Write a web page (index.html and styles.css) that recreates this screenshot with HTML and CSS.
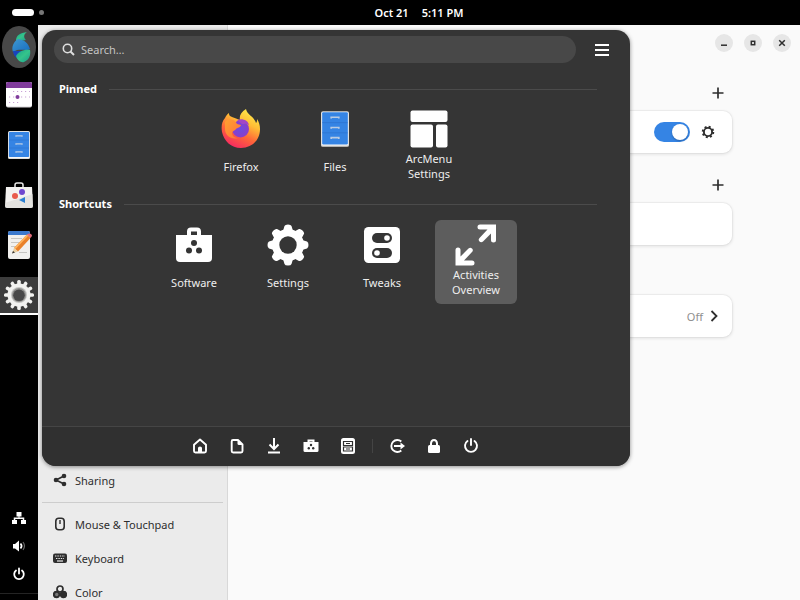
FILE: index.html
```html
<!DOCTYPE html>
<html lang="en">
<head>
<meta charset="utf-8">
<title>Desktop</title>
<link rel="stylesheet" href="styles.css">
</head>
<body>
<header class="topbar">
  <button class="workspaces" aria-label="Workspaces"><span class="pill"></span><span class="dot"></span></button>
  <button class="clock"><span>Oct 21</span><span>5:11 PM</span></button>
</header>
<div class="desktop">
  <nav class="dock" aria-label="Dock">
    <button class="dock-item start" aria-label="Menu">
      <svg width="34" height="42" viewBox="0 0 34 42">
        <defs>
          <linearGradient id="g1" x1="0" y1="0" x2="1" y2="1"><stop offset="0" stop-color="#17a58f"/><stop offset=".5" stop-color="#35c48a"/><stop offset="1" stop-color="#1b9d8d"/></linearGradient>
          <linearGradient id="g2" x1="0" y1="0" x2="1" y2="1"><stop offset="0" stop-color="#3f97d0"/><stop offset="1" stop-color="#176dc2"/></linearGradient>
        </defs>
        <path fill="url(#g1)" d="M14 15C14 9 18 7 25 6c-3 2-4 5-1 8-3 1-7 0-10 1z"/>
        <path fill="url(#g2)" d="M16 13c-4 2-7 8-5 13l4-2c6-1 10 1 13-1-2-6-5-9-12-10z"/>
        <path fill="#1844bd" d="M11 25h10l-5 8c-3-2-5-5-5-8z"/>
        <path fill="url(#g1)" d="M14 30c2-4 8-7 14-6 1 5-1 10-6 12-3 1-7-2-8-6z"/>
      </svg>
    </button>
    <button class="dock-item" aria-label="Calendar">
      <svg width="26" height="26" viewBox="0 0 26 26">
        <rect width="26" height="25.500" rx="2" fill="#d5d2d6"/><rect width="26" height="24.500" rx="2" fill="#fff"/>
        <path fill="#813d9c" d="M2 0h22a2 2 0 0 1 2 2v4H0V2a2 2 0 0 1 2-2z"/>
        <path stroke="#c9a3d6" stroke-width="1.200" stroke-dasharray="1.200 2.800" d="M7 9.500h17M3 15h21M3 20.500h10"/>
        <circle cx="11.500" cy="15" r="2" fill="#813d9c"/>
      </svg>
    </button>
    <button class="dock-item" aria-label="Files">
      <svg width="22" height="28" viewBox="0 0 22 28"><use href="#cabinet"/></svg>
    </button>
    <button class="dock-item" aria-label="Software">
      <svg width="28" height="28" viewBox="0 0 28 28">
        <path d="M10 7V4a2 2 0 0 1 2-2h4a2 2 0 0 1 2 2v3" fill="none" stroke="#e9e9e7" stroke-width="1.500"/>
        <path fill="#f3f2f0" d="M1 6h26l1 19a2 2 0 0 1-2 2H2a2 2 0 0 1-2-2z"/>
        <path fill="#d5d3cf" d="M0 22l28-9v12a2 2 0 0 1-2 2H2a2 2 0 0 1-2-2z" opacity=".5"/>
        <circle cx="17" cy="11" r="3" fill="#7048cf"/><circle cx="10" cy="15" r="3" fill="#e95b4c"/><path fill="#2b7fd1" d="M14 19l6-3v6z"/>
      </svg>
    </button>
    <button class="dock-item" aria-label="Text Editor">
      <svg width="26" height="30" viewBox="0 0 26 30">
        <rect x="2" y="1" width="22" height="28" rx="2" fill="#f1f0ee"/><path fill="#3b79cd" d="M4 1h18a2 2 0 0 1 2 2v2H2V3a2 2 0 0 1 2-2z"/>
        <path stroke="#c6c5c2" d="M5 8.500h11M5 12.500h9M5 16.500h5M13 22.500h8"/>
        <path fill="#e9812a" d="M8 18L21 4.500l3.500 3.500L12 21.500z"/><path fill="#ffb45e" d="M8 18L21 4.500l1.200 1.200L9.500 19z"/>
        <path fill="#ead0a2" d="M8 18l4 3.500L6 23.500z"/><path fill="#333" d="M7 21l2 1.500-3 1z"/>
        <path fill="#e06b79" d="M21 4.500c2-2 5-1 5 1.500l-1.500 2z"/>
      </svg>
    </button>
    <button class="dock-item active" aria-label="Settings">
      <svg width="30" height="30" viewBox="-15 -15 30 30">
        <g fill="#f2f2f0">
          <g id="teeth"><rect x="-1.800" y="-15" width="3.600" height="30" rx="1.500"/><rect x="-15" y="-1.800" width="30" height="3.600" rx="1.500"/></g>
          <use href="#teeth" transform="rotate(30)"/><use href="#teeth" transform="rotate(60)"/>
          <circle r="11.500"/>
        </g>
        <circle r="8" fill="#c4c4c2"/><circle r="7" fill="#8e8e8c"/><circle r="5.800" cy=".3" fill="#484848"/>
      </svg>
    </button>
    <div class="tray">
      <button aria-label="Network"><svg width="14" height="14" viewBox="0 0 14 14"><path fill="#fff" d="M4.500 1h5v4.500h-5zM0 9h5v4H0zM9 9h5v4H9zM6.500 5h1v2.500H6.500z"/><path fill="none" stroke="#fff" stroke-width="1.500" d="M2.500 10V7.300h9V10"/></svg></button>
      <button aria-label="Volume"><svg width="14" height="14" viewBox="0 0 14 14"><path fill="#fff" d="M1 5h2l4-3.500v11L3 9.500H1z"/><path fill="none" stroke="#fff" stroke-width="1.700" d="M8.500 4.500q2.200 2.500 0 5"/><path fill="none" stroke="#666" stroke-width="1.200" d="M11 3q3 4 0 8"/></svg></button>
      <button aria-label="Power"><svg width="14" height="14" viewBox="0 0 14 14"><path fill="none" stroke="#fff" stroke-width="1.800" stroke-linecap="round" d="M4 3.500a4.800 4.800 0 1 0 6 0M7 1.500v5"/></svg></button>
    </div>
    <hr class="dock-end">
  </nav>
  <div class="window">
    <nav class="sidebar" aria-label="Settings panels">
      <a href="#sharing"><svg width="14" height="14" viewBox="0 0 14 14"><path stroke="#2e2e2e" stroke-width="1.700" fill="none" d="M11 3L3 7l8 4"/><g fill="#2e2e2e"><circle cx="11" cy="3" r="2.300"/><circle cx="3" cy="7" r="2.300"/><circle cx="11" cy="11" r="2.300"/></g></svg>Sharing</a>
      <hr>
      <a href="#mouse"><svg width="14" height="14" viewBox="0 0 14 14"><rect x="2.800" y="1.300" width="8.400" height="11.400" rx="3" fill="none" stroke="#2e2e2e" stroke-width="1.600"/><path stroke="#2e2e2e" stroke-width="1.400" d="M7 3v4"/></svg>Mouse &amp; Touchpad</a>
      <a href="#keyboard"><svg width="14" height="14" viewBox="0 0 14 14"><rect x="0" y="2.500" width="14" height="9.500" rx="2" fill="#2e2e2e"/><path stroke="#ebebeb" stroke-width="1.200" stroke-dasharray="1.400 1" d="M2 5h10M3 7.500h8"/><path stroke="#ebebeb" stroke-width="1.200" d="M4 10h6"/></svg>Keyboard</a>
      <a href="#color"><svg width="14" height="14" viewBox="0 0 14 14"><circle cx="7" cy="4" r="3" fill="none" stroke="#2e2e2e" stroke-width="1.700"/><circle cx="3.500" cy="9.500" r="3.700" fill="#2e2e2e"/><circle cx="10.500" cy="9.500" r="3.700" fill="#2e2e2e"/><circle cx="3.700" cy="9.500" r="1.700" fill="#777"/></svg>Color</a>
    </nav>
    <main class="panel">
      <div class="controls">
        <button aria-label="Minimize"><svg width="10" height="10" viewBox="0 0 10 10"><path stroke="#2e2e2e" stroke-width="1.500" d="M2 7.200h6"/></svg></button>
        <button aria-label="Maximize"><svg width="10" height="10" viewBox="0 0 10 10"><rect x="3.300" y="3.300" width="3.400" height="3.400" fill="none" stroke="#2e2e2e" stroke-width="1.500"/></svg></button>
        <button aria-label="Close"><svg width="10" height="10" viewBox="0 0 10 10"><path stroke="#2e2e2e" stroke-width="1.500" d="M2.200 2.200l5.600 5.600M7.800 2.200L2.200 7.800"/></svg></button>
      </div>
      <div class="column">
        <div class="group-head"><button aria-label="Add"><svg width="12" height="12" viewBox="0 0 12 12"><path stroke="#2e2e2e" stroke-width="1.700" d="M6 .5v11M.5 6h11"/></svg></button></div>
        <div class="card">
          <input type="checkbox" class="switch" aria-label="Connection" checked>
          <button aria-label="Options"><svg width="14" height="14" viewBox="-7 -7 14 14"><circle r="5.300" fill="none" stroke="#2e2e2e" stroke-width="1.900" stroke-dasharray="2 2.163"/><circle r="4.100" fill="none" stroke="#2e2e2e" stroke-width="1.900"/></svg></button>
        </div>
        <div class="group-head"><button aria-label="Add"><svg width="12" height="12" viewBox="0 0 12 12"><path stroke="#2e2e2e" stroke-width="1.700" d="M6 .5v11M.5 6h11"/></svg></button></div>
        <div class="card"></div>
        <div class="group-head"></div>
        <button class="card proxy">Off<svg width="14" height="14" viewBox="0 0 14 14"><path fill="none" stroke="#2e2e2e" stroke-width="1.800" d="M4.500 2l5 5-5 5"/></svg></button>
      </div>
    </main>
  </div>
</div>

<section class="menu" aria-label="Applications">
  <div class="menu-head">
    <label class="search">
      <svg width="14" height="14" viewBox="0 0 14 14"><circle cx="5.500" cy="5.500" r="4.200" fill="none" stroke="#dedede" stroke-width="1.600"/><path stroke="#dedede" stroke-width="2" d="M8.500 8.500l3.500 3.500"/></svg>
      <input type="text" placeholder="Search…" aria-label="Search">
    </label>
    <button class="burger" aria-label="Categories"><svg width="14" height="14" viewBox="0 0 14 14"><path stroke="#fff" stroke-width="2" d="M0 2h14M0 7h14M0 12h14"/></svg></button>
  </div>
  <h2>Pinned</h2>
  <div class="tiles">
    <button class="tile">
      <svg width="40" height="40" viewBox="0 0 40 40">
        <defs>
          <linearGradient id="fx" x1=".8" y1="0" x2=".3" y2="1"><stop offset="0" stop-color="#fff04d"/><stop offset=".35" stop-color="#ffbd35"/><stop offset=".65" stop-color="#ff6738"/><stop offset="1" stop-color="#f52763"/></linearGradient>
          <linearGradient id="fy" x1="0" y1="0" x2="1" y2="1"><stop offset="0" stop-color="#ffa130"/><stop offset="1" stop-color="#ff7139"/></linearGradient>
          <radialGradient id="fp"><stop offset="0" stop-color="#6d4be0"/><stop offset="1" stop-color="#8a3fc9"/></radialGradient>
        </defs>
        <path fill="url(#fx)" d="M25 0c-5 3-7 7-6 11l-8-3-2-1c-1-1-1-2-1-3-2 1-3 3-4 5C1 12 0 17 1 23c2 9 9 16 19 16 11 0 19-8 19-19 0-4-1-7-3-10 0 2 0 3-1 4C33 7 26 6 25 0z"/>
        <circle cx="19.500" cy="20" r="8.500" fill="url(#fp)"/>
        <path fill="#a247c6" d="M16 11c5-2 11 0 12 5-3-2-5-1-7-1z"/>
        <path fill="url(#fy)" d="M4 13c2-3 5-3 8-2 2 1 3 2 4 4l4 1c0 2-4 3-5 4-1 2-3 1-4 4 0 3 3 5 6 5-6 2-13-2-13-9z"/>
      </svg>
      <span>Firefox</span>
    </button>
    <button class="tile">
      <svg width="28" height="40" viewBox="0 0 22 28">
        <g id="cabinet"><rect width="22" height="28" rx="1.500" fill="#deddda"/><rect x=".7" y=".7" width="20.600" height="26" rx="1" fill="#fff"/><rect x=".9" y=".9" width="20.200" height="25.200" rx=".8" fill="#3584e4"/>
        <path stroke="#2a6fc9" stroke-width=".5" d="M1 9h20M1 17h20"/><path fill="none" stroke="#b9cbe2" stroke-width="1.300" d="M8 5.800V4.800h6v1M8 13.800v-1h6v1M8 21.800v-1h6v1"/></g>
      </svg>
      <span>Files</span>
    </button>
    <button class="tile">
      <svg width="40" height="40" viewBox="0 0 40 40"><g fill="#fff"><rect x="1.500" y="1.500" width="37" height="11.500" rx="2"/><rect x="1.500" y="15.500" width="22.500" height="23" rx="2"/><rect x="27" y="15.500" width="11.500" height="23" rx="2"/></g></svg>
      <span>ArcMenu Settings</span>
    </button>
  </div>
  <h2>Shortcuts</h2>
  <div class="tiles">
    <button class="tile">
      <svg width="40" height="40" viewBox="0 0 40 40"><path fill="none" stroke="#fff" stroke-width="4" d="M15 12V6.500q0-2 2-2h6q2 0 2 2V12"/><path fill="#fff" d="M2 10h36v23a4 4 0 0 1-4 4H6a4 4 0 0 1-4-4z"/><g fill="#353535"><circle cx="20" cy="18" r="3"/><circle cx="15" cy="25.500" r="3"/><circle cx="25" cy="25.500" r="3"/></g></svg>
      <span>Software</span>
    </button>
    <button class="tile">
      <svg width="42" height="42" viewBox="-21 -21 42 42"><g fill="#fff"><g id="cog"><path d="M-5-14l1.500-5q.5-1.500 3.500-1.500T3.500-19L5-14v28l-1.500 5q-.500 1.500-3.500 1.500T-3.500 19L-5 14z"/></g><use href="#cog" transform="rotate(45)"/><use href="#cog" transform="rotate(90)"/><use href="#cog" transform="rotate(135)"/><circle r="16"/></g><circle r="8.700" fill="#353535"/></svg>
      <span>Settings</span>
    </button>
    <button class="tile">
      <svg width="40" height="40" viewBox="0 0 40 40"><rect x="2" y="2" width="36" height="36" rx="4.500" fill="#fff"/><g fill="#353535"><rect x="10" y="8" width="20" height="10" rx="5"/><rect x="10" y="23" width="20" height="10" rx="5"/></g><circle cx="25" cy="13" r="2.800" fill="#fff"/><circle cx="15" cy="28" r="2.800" fill="#fff"/></svg>
      <span>Tweaks</span>
    </button>
    <button class="tile selected">
      <svg width="42" height="42" viewBox="0 0 42 42"><path fill="#fff" d="M25 .5h16V16q0 2.500-2.500 2.500T36 16V9.500l-8 8q-1.800 1.600-3.500 0t0-3.500l8-8.500H25Q22.500 5.500 22.500 3T25 .5zM17 41.500H.500V26q0-2.500 2.500-2.500T5.500 26v6.500l8-8q1.800-1.600 3.500 0t0 3.500l-8 8.500h8q2.500 0 2.500 2.500T17 41.500z"/></svg>
      <span>Activities Overview</span>
    </button>
  </div>
  <footer class="menu-foot">
    <button aria-label="Home"><svg width="16" height="16" viewBox="0 0 16 16"><path fill="none" stroke="#fff" stroke-width="1.900" stroke-linejoin="round" d="M2 6.800L8 1.500l6 5.300V13q0 1.500-1.500 1.500h-9Q2 14.500 2 13z"/><path fill="#fff" d="M6 15v-5q0-1.500 2-1.500t2 1.500v5z"/></svg></button>
    <button aria-label="Documents"><svg width="16" height="16" viewBox="0 0 16 16"><path fill="none" stroke="#fff" stroke-width="1.900" stroke-linejoin="round" d="M4 2h5l4.500 4.500V13q0 1.500-1.500 1.500H4.200Q2.700 14.500 2.700 13V3.500Q2.700 2 4 2z"/><path fill="#fff" d="M8.500 2l5.500 5h-4q-1.500 0-1.500-1.500z"/></svg></button>
    <button aria-label="Downloads"><svg width="16" height="16" viewBox="0 0 16 16"><path fill="none" stroke="#fff" stroke-width="2" d="M8 0v11M3.500 6.500L8 11l4.500-4.500M2 14.500h12"/></svg></button>
    <button aria-label="Software"><svg width="16" height="16" viewBox="0 0 16 16"><path fill="none" stroke="#fff" stroke-width="2" d="M5.500 5V2.500h5V5"/><path fill="#fff" d="M.5 4h15v8.500q0 1.500-1.500 1.500H2Q.5 14 .5 12.500z"/><g fill="#303030"><circle cx="8" cy="7" r="1.200"/><circle cx="5.800" cy="10.300" r="1.200"/><circle cx="10.200" cy="10.300" r="1.200"/></g></svg></button>
    <button aria-label="Files"><svg width="16" height="16" viewBox="0 0 16 16"><rect x="1" width="14" height="16" rx="2.500" fill="#fff"/><path fill="none" stroke="#303030" stroke-width="1.200" d="M3.500 3.500h9v4h-9zM3.500 9h9v4h-9zM6 5.500h4M6 11h4"/></svg></button>
    <span class="divider"></span>
    <button aria-label="Log Out"><svg width="16" height="16" viewBox="0 0 16 16"><path fill="none" stroke="#fff" stroke-width="1.900" d="M12.300 3.500a6 6 0 1 0 0 9M5 8h8"/><path fill="#fff" d="M11.500 4.500L16 8l-4.500 3.500z"/></svg></button>
    <button aria-label="Lock"><svg width="16" height="16" viewBox="0 0 16 16"><path fill="none" stroke="#fff" stroke-width="2" d="M5 8V5.500a3 3.500 0 0 1 6 0V8"/><rect x="2" y="7" width="12" height="8" rx="1.500" fill="#fff"/></svg></button>
    <button aria-label="Power Off"><svg width="16" height="16" viewBox="0 0 16 16"><path fill="none" stroke="#fff" stroke-width="1.900" stroke-linecap="round" d="M4.500 3a6 6 0 1 0 7 0M8 1v6"/></svg></button>
  </footer>
</section>
</body>
</html>
```
FILE: styles.css
```css
* { box-sizing: border-box; }

body {
  margin: 0;
  height: 100vh;
  display: flex;
  flex-direction: column;
  overflow: hidden;
  background: #000;
  color: #2e2e2e;
  font-family: "Noto Sans", sans-serif;
  font-size: 11px;
}

button {
  margin: 0;
  padding: 0;
  border: 0;
  background: none;
  color: inherit;
  font: inherit;
}

svg { display: block; flex: none; }

.topbar {
  height: 25px;
  flex: none;
  display: grid;
  grid-template-columns: 1fr auto 1fr;
  align-items: center;
  padding: 0 12px;
  color: #fff;
}

.workspaces { display: flex; align-items: center; gap: 5px; }
.pill { width: 22px; height: 7px; border-radius: 4px; background: #fff; }
.dot { width: 5px; height: 5px; border-radius: 50%; background: #777; }

.clock {
  grid-column: 2;
  display: flex;
  gap: 13px;
  padding-left: 38px;
  font-weight: 600;
}

.desktop { flex: 1; min-height: 0; display: flex; }

.dock {
  width: 38px;
  flex: none;
  display: flex;
  flex-direction: column;
  align-items: center;
  gap: 14px;
  padding-top: 1px;
}

.dock-item {
  width: 38px;
  height: 36px;
  flex: none;
  display: flex;
  align-items: center;
  justify-content: center;
}

.start {
  width: 34px;
  height: 42px;
  margin-bottom: -5px;
  border-radius: 50%;
  background: #484848;
}

.active { background: #3c3c3c; border-bottom: 2px solid #fff; height: 38px; }

.tray {
  margin-top: auto;
  display: flex;
  flex-direction: column;
  gap: 14px;
}

.dock-end { width: 100%; margin: -2px 0 6px; border: 0; border-top: 1px solid #242424; }

.window { flex: 1; min-width: 0; display: flex; background: #fafafa; }

.sidebar {
  width: 190px;
  flex: none;
  display: flex;
  flex-direction: column;
  padding: 438px 4px 0;
  border-right: 1px solid #d8d8d8;
  background: #ebebeb;
  overflow: hidden;
}

.sidebar a {
  height: 34px;
  flex: none;
  display: flex;
  align-items: center;
  gap: 8px;
  padding-left: 11px;
  color: inherit;
  text-decoration: none;
}

.sidebar hr { width: 100%; margin: 5px 0 4px; border: 0; border-top: 1px solid #cdcdcd; }

.panel { flex: 1; min-width: 0; display: flex; flex-direction: column; }

.controls {
  height: 36px;
  display: flex;
  align-items: center;
  justify-content: flex-end;
  gap: 11px;
  padding-right: 9px;
}

.controls button {
  width: 18px;
  height: 18px;
  display: grid;
  place-items: center;
  border-radius: 50%;
  background: #e6e6e6;
}

.column { margin: 0 68px; }

.group-head {
  height: 50px;
  display: flex;
  align-items: center;
  justify-content: flex-end;
  padding: 14px 8px 0;
}

.card {
  width: 100%;
  height: 42px;
  display: flex;
  align-items: center;
  justify-content: flex-end;
  gap: 11px;
  padding-right: 17px;
  border-radius: 9px;
  background: #fff;
  box-shadow: 0 0 0 1px #00000008, 0 1px 3px 1px #00000014;
}

.proxy { gap: 4px; padding-right: 11px; color: #8e8e8e; }

.switch {
  appearance: none;
  width: 36px;
  height: 20px;
  display: flex;
  justify-content: flex-end;
  margin: 0;
  padding: 2px;
  border-radius: 10px;
  background: #3584e4;
}

.switch::before {
  content: "";
  width: 16px;
  height: 16px;
  border-radius: 50%;
  background: #fff;
  box-shadow: 0 1px 2px #00000040;
}

.menu {
  position: absolute;
  left: 42px;
  right: 170px;
  top: 30px;
  height: 436px;
  display: flex;
  flex-direction: column;
  overflow: hidden;
  border-radius: 14px;
  background: #353535;
  color: #eee;
  box-shadow: 0 1px 4px #00000070;
}

.menu-head {
  display: flex;
  align-items: center;
  gap: 19px;
  padding: 6px 21px 0 12px;
}

.search {
  flex: 1;
  height: 27px;
  display: flex;
  align-items: center;
  gap: 5px;
  padding-left: 8px;
  border-radius: 14px;
  background: #484848;
}

.search input {
  flex: 1;
  border: 0;
  padding: 0;
  outline: 0;
  background: none;
  color: #eee;
  font: inherit;
}

.search input::placeholder { color: #c4c4c4; opacity: 1; }

h2 {
  display: flex;
  align-items: center;
  gap: 12px;
  margin: 18px 33px 7px 17px;
  color: #fff;
  font-size: 11px;
  line-height: 16px;
  font-weight: 700;
}

h2::after { content: ""; flex: 1; height: 1px; background: #4b4b4b; }

.tiles {
  display: flex;
  justify-content: center;
  gap: 12px;
  padding-right: 2px;
}

.tiles + h2 { margin-top: 8px; margin-bottom: 8px; }

.tile {
  width: 82px;
  height: 84px;
  display: grid;
  grid-template-rows: 40px 30px;
  row-gap: 2px;
  place-items: center;
  padding: 5px 8px 7px;
  border-radius: 6px;
  line-height: 15px;
}

.selected { background: #5d5d5d; }

.menu-foot {
  height: 40px;
  display: flex;
  align-items: center;
  justify-content: center;
  gap: 21px;
  margin-top: auto;
  padding: 0 2px 2px 0;
  border-top: 1px solid #454545;
  background: #303030;
}

.divider { width: 1px; height: 14px; margin: 0 -5px; background: #444; }
```
